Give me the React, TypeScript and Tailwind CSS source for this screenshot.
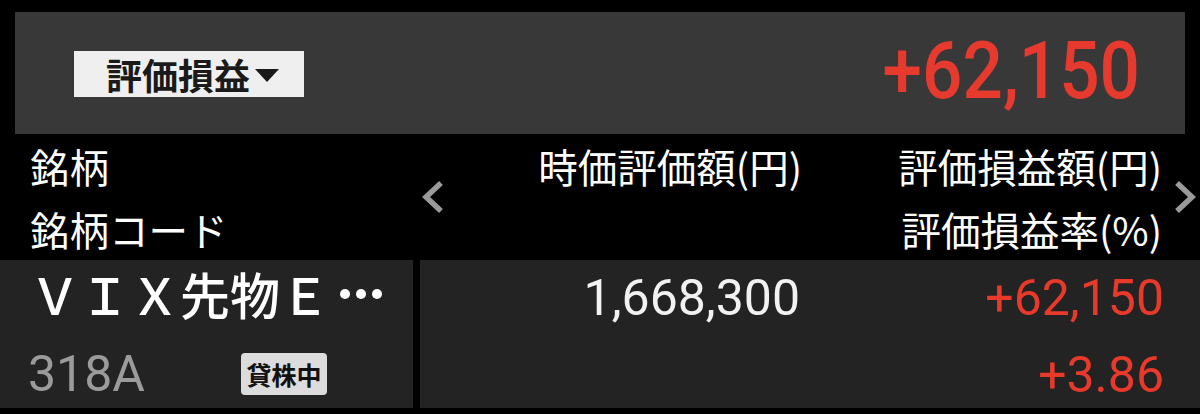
import React from "react";

const CJK = "font-['Noto_Sans_CJK_JP','Noto_Sans',sans-serif]";
const NUM = "font-['Roboto','Noto_Sans_CJK_JP',sans-serif]";

function ChevronLeft() {
  return (
    <svg width="22" height="34" viewBox="0 0 22 34">
      <polyline points="19,3 4,17 19,31" fill="none" stroke="#9a9a9a" strokeWidth="5.5" />
    </svg>
  );
}

function ChevronRight() {
  return (
    <svg width="22" height="34" viewBox="0 0 22 34">
      <polyline points="3,3 18,17 3,31" fill="none" stroke="#9a9a9a" strokeWidth="5.5" />
    </svg>
  );
}

export default function App() {
  return (
    <div className={`w-[1200px] h-[414px] bg-black overflow-hidden flex flex-col ${CJK}`}>
      {/* Summary panel */}
      <div className="pt-[12px] px-[15px]">
        <div className="h-[122px] bg-[#383838] flex items-center justify-between pl-[59px] pr-[45px]">
          <div className="w-[230px] h-[46px] bg-[#efefef] flex items-center pl-[32px] mt-[2px]">
            <span className="text-[36px] leading-none font-bold text-[#1a1a1a]">評価損益</span>
            <svg width="24" height="13" viewBox="0 0 24 13" className="ml-[5px] mt-[2px]">
              <polygon points="0,0 24,0 12,13" fill="#1a1a1a" />
            </svg>
          </div>
          <div
            className={`${NUM} text-[79px] leading-none font-medium text-[#e63a2e] scale-x-90 origin-right -mt-[4px]`}
          >
            +62,150
          </div>
        </div>
      </div>

      {/* Header row */}
      <div className="h-[126px] flex items-center text-white text-[39.5px] leading-[63px]">
        <div className="w-[410px] pl-[30px] flex flex-col">
          <span>銘柄</span>
          <span>銘柄コード</span>
        </div>
        <div className="w-[50px] pl-[12px] flex items-center">
          <ChevronLeft />
        </div>
        <div className="w-[342px] flex flex-col items-end self-start">
          <span>時価評価額(円)</span>
        </div>
        <div className="w-[360px] flex flex-col items-end">
          <span>評価損益額(円)</span>
          <span>評価損益率(%)</span>
        </div>
        <div className="flex-1 pl-[12px] flex items-center">
          <ChevronRight />
        </div>
      </div>

      {/* Data row */}
      <div className="h-[148px] flex gap-[7px]">
        <div className="w-[413px] bg-[#232323] flex flex-col pl-[30px]">
          <div className="flex items-center text-[50px] leading-[66px] text-white font-medium whitespace-nowrap">
            <span>ＶＩＸ先物Ｅ</span>
            <span className="flex items-center gap-[6px] ml-[10px] mt-[2px]">
              <span className="w-[10px] h-[10px] rounded-full bg-white" />
              <span className="w-[10px] h-[10px] rounded-full bg-white" />
              <span className="w-[10px] h-[10px] rounded-full bg-white" />
            </span>
          </div>
          <div className="flex items-center mt-[24px]">
            <span className={`${NUM} w-[213px] -ml-[2px] text-[50px] leading-[48px] text-[#9b9b9b]`}>318A</span>
            <span className="w-[86px] h-[42px] bg-[#dcdcdc] rounded-[4px] flex items-center justify-center text-[25px] leading-none font-bold text-[#111]">
              貸株中
            </span>
          </div>
        </div>
        <div className={`flex-1 bg-[#232323] flex ${NUM} text-[50px] leading-[48px]`}>
          <div className="w-[380px] flex flex-col items-end pt-[14px] text-[#f2f2f2]">
            <span>1,668,300</span>
          </div>
          <div className="w-[364px] flex flex-col items-end pt-[14px] gap-[29px] text-[#e8392b]">
            <span>+62,150</span>
            <span>+3.86</span>
          </div>
        </div>
      </div>
    </div>
  );
}
